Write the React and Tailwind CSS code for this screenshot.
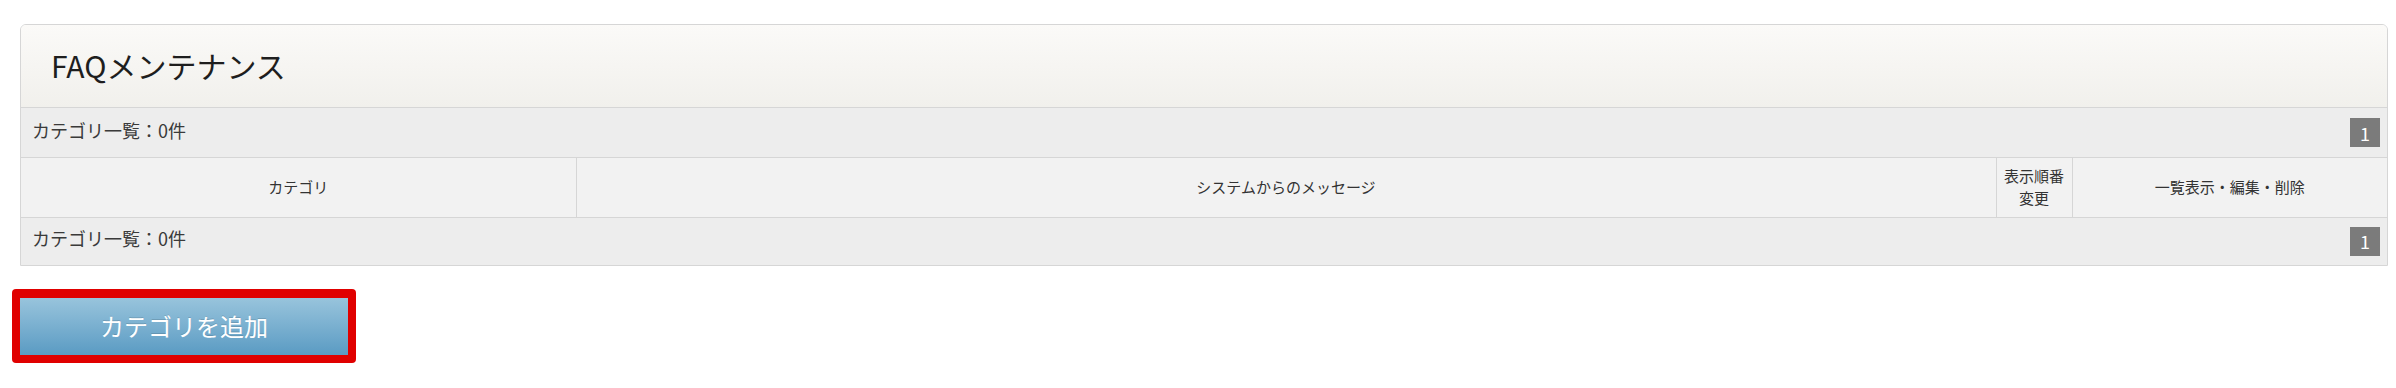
export default function App() {
  const font = { fontFamily: '"Noto Sans CJK JP", "Noto Sans", sans-serif' };

  const PageBadge = () => (
    <span className="flex h-[29px] w-[30px] items-center justify-center bg-[#7b7b7b] text-[18px] leading-none text-white">
      1
    </span>
  );

  const CountRow = ({ last }) => (
    <div
      className={`flex items-center justify-between bg-[#ededed] pl-[11px] pr-[7px] ${
        last ? 'h-[47px]' : 'h-[50px] border-b border-[#d6d6d6]'
      }`}
    >
      <span className="pb-[5px] text-[18px] text-[#3a3a3a]">カテゴリ一覧：0件</span>
      <PageBadge />
    </div>
  );

  return (
    <div className="min-h-[388px] w-[2396px] bg-white pt-[24px]" style={font}>
      <div className="ml-[20px] w-[2368px] overflow-hidden rounded-t-[6px] border border-[#d6d6d6]">
        <div className="flex h-[83px] items-center border-b border-[#d6d6d6] bg-gradient-to-b from-[#fbfaf8] to-[#f1f0ec] pb-[3px] pl-[30px]">
          <h1 className="text-[30px] font-normal leading-none text-[#1e1e1e]">FAQメンテナンス</h1>
        </div>

        <CountRow />

        <table className="w-full border-collapse bg-[#f2f2f2] text-[15px] text-[#333]">
          <thead>
            <tr className="h-[59px] border-b border-[#d6d6d6]">
              <th className="w-[555px] border-r border-[#d6d6d6] font-normal">カテゴリ</th>
              <th className="border-r border-[#d6d6d6] font-normal">システムからのメッセージ</th>
              <th className="w-[76px] border-r border-[#d6d6d6] px-[6px] font-normal leading-[22px]">
                表示順番
                <br />
                変更
              </th>
              <th className="w-[315px] font-normal">一覧表示・編集・削除</th>
            </tr>
          </thead>
        </table>

        <CountRow last />
      </div>

      <div className="ml-[12px] mt-[23px] inline-block rounded-[4px] bg-[#e00000] px-[8px] pb-[8px] pt-[9px]">
        <button
          type="button"
          className="flex h-[57px] w-[328px] items-center justify-center bg-gradient-to-b from-[#98c4dc] to-[#5a9bc3] text-[24px] text-white [text-shadow:0_-1px_0_rgba(0,0,0,0.15)]"
        >
          カテゴリを追加
        </button>
      </div>
    </div>
  );
}
